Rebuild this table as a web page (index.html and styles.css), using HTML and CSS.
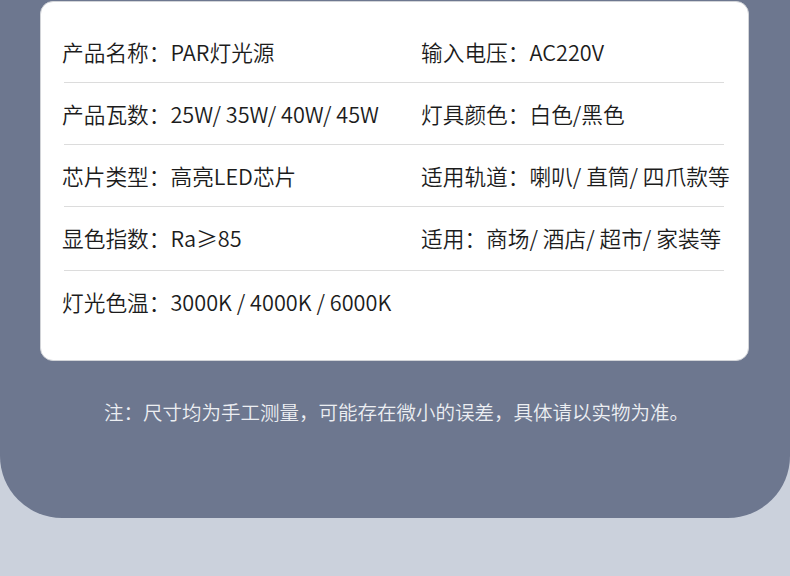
FILE: index.html
```html
<!DOCTYPE html>
<html lang="zh-CN">
<head>
<meta charset="utf-8">
<link rel="stylesheet" href="styles.css">
</head>
<body>
<div class="panel">
  <div class="card">
    <div class="rows">
      <div class="row">
        <div class="cell left">产品名称：PAR灯光源</div>
        <div class="cell right">输入电压：AC220V</div>
      </div>
      <div class="row">
        <div class="cell left">产品瓦数：25W/ 35W/ 40W/ 45W</div>
        <div class="cell right">灯具颜色：白色/黑色</div>
      </div>
      <div class="row">
        <div class="cell left">芯片类型：高亮LED芯片</div>
        <div class="cell right">适用轨道：喇叭/ 直筒/ 四爪款等</div>
      </div>
      <div class="row tall">
        <div class="cell left">显色指数：Ra≥85</div>
        <div class="cell right">适用：商场/ 酒店/ 超市/ 家装等</div>
      </div>
      <div class="row last">
        <div class="cell left">灯光色温：3000K / 4000K / 6000K</div>
        <div class="cell right"></div>
      </div>
    </div>
  </div>
  <p class="note">注：尺寸均为手工测量，可能存在微小的误差，具体请以实物为准。</p>
</div>
</body>
</html>
```

FILE: styles.css
```css
html, body {
  margin: 0;
  padding: 0;
}
body {
  background: #cbd1dc;
  width: 790px;
  height: 576px;
  overflow: hidden;
  font-family: "Noto Sans CJK SC", "Noto Sans", sans-serif;
}
.panel {
  background: #6d778f;
  height: 518px;
  box-sizing: border-box;
  padding: 1px 41px 0 40px;
  border-radius: 0 0 62px 62px;
}
.card {
  box-sizing: border-box;
  width: 709px;
  height: 360px;
  background: #fff;
  border: 1px solid #d2d4d8;
  border-radius: 13px;
  padding: 19px 0 0 23px;
}
.rows {
  width: 660px;
}
.row {
  display: grid;
  grid-template-columns: 359px 1fr;
  height: 62px;
  box-sizing: border-box;
  border-bottom: 1px solid #dcdcdc;
  align-items: center;
}
.row.tall {
  height: 64px;
  padding-bottom: 2px;
}
.row.last {
  border-bottom: none;
}
.cell {
  font-size: 21.7px;
  font-weight: 350;
  color: #1c1c1c;
  white-space: nowrap;
  line-height: 1;
  margin-left: -2px;
}
.note {
  margin: 38px 0 0 0;
  text-align: center;
  color: #eceef2;
  font-size: 19.5px;
  font-weight: 350;
  line-height: 26px;
  padding-left: 4px;
}
```
